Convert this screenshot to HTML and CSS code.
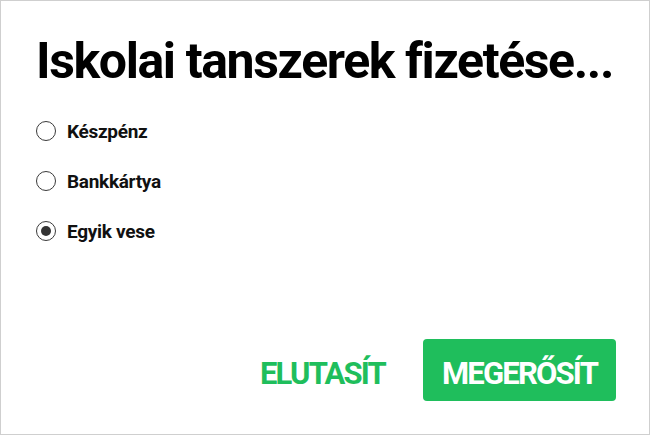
FILE: index.html
```html
<!DOCTYPE html>
<html lang="hu">
<head>
<meta charset="utf-8">
<link rel="stylesheet" href="styles.css">
</head>
<body>
<div class="dialog">
  <h1 class="title">Iskolai tanszerek fizetése...</h1>
  <div class="options">
    <label class="option"><span class="radio"></span><span class="label">Készpénz</span></label>
    <label class="option"><span class="radio"></span><span class="label">Bankkártya</span></label>
    <label class="option"><span class="radio checked"></span><span class="label">Egyik vese</span></label>
  </div>
  <div class="actions">
    <button class="btn btn-text">ELUTASÍT</button>
    <button class="btn btn-primary">MEGERŐSÍT</button>
  </div>
</div>
</body>
</html>
```
FILE: styles.css
```css
html, body {
  margin: 0;
  padding: 0;
  background: #fff;
}
.dialog {
  box-sizing: border-box;
  width: 650px;
  height: 435px;
  border: 1px solid #cfcfcf;
  display: flex;
  flex-direction: column;
  font-family: Roboto, "Liberation Sans", sans-serif;
}
.title {
  margin: 35px 0 0 35px;
  font-size: 50px;
  font-weight: 700;
  letter-spacing: -1.4px;
  line-height: 50px;
  color: #000;
}
.options {
  margin: 35px 0 0 35px;
  display: flex;
  flex-direction: column;
  gap: 30px;
}
.option {
  display: flex;
  align-items: center;
  gap: 11px;
  height: 20px;
}
.radio {
  box-sizing: border-box;
  width: 20px;
  height: 20px;
  border: 1.5px solid #3a3a3a;
  border-radius: 50%;
  display: flex;
  align-items: center;
  justify-content: center;
}
.radio.checked::after {
  content: "";
  width: 10px;
  height: 10px;
  border-radius: 50%;
  background: #333;
}
.label {
  font-size: 19px;
  font-weight: 700;
  letter-spacing: -0.3px;
  color: #111;
}
.actions {
  margin-top: auto;
  margin-bottom: 33px;
  margin-right: 33px;
  display: flex;
  justify-content: flex-end;
  align-items: center;
  gap: 38px;
}
.btn {
  font-family: Roboto, "Liberation Sans", sans-serif;
  font-weight: 700;
  font-size: 31px;
  letter-spacing: -1.8px;
  border: none;
  height: 62px;
  padding: 6px 0 0 0;
  cursor: pointer;
}
.btn-text {
  background: none;
  color: #1fbe5c;
}
.btn-primary {
  background: #1fbe5c;
  color: #fff;
  width: 193px;
  border-radius: 4px;
}
```
